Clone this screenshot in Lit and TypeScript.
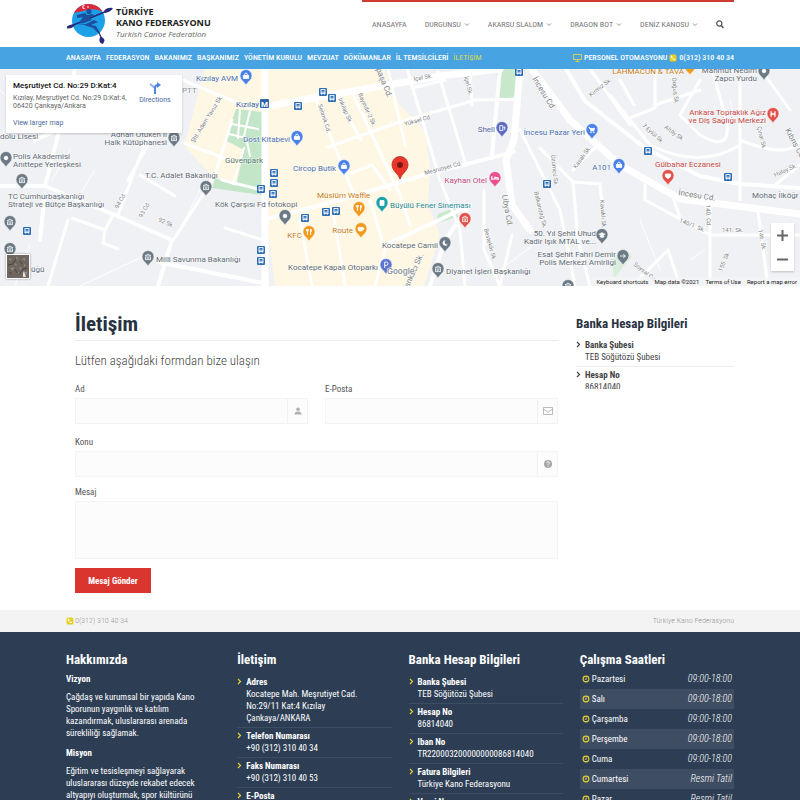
import { LitElement, html, svg, css } from "lit";
import { customElement } from "lit/decorators.js";

type Glyph = "bank" | "bag" | "dot" | "food" | "cup" | "cart" | "P" | "H" | "bed" | "moon" | "fuel" | "heart" | "cap" | "arrow" | "film";

interface Place {
  lines: string[];
  x: number;
  y: number;
  end?: boolean;
  color: string;
}

const GRAY = "#5f6b76";
const BLUE = "#4a6fae";
const ORANGE = "#c77c15";
const RED = "#c5453f";

const places: Place[] = [
  { lines: ["Kızılay AVM"], x: 238, y: 81, end: true, color: BLUE },
  { lines: ["Kızılay"], x: 259, y: 107, end: true, color: "#3c5f96" },
  { lines: ["PTT"], x: 182, y: 93, color: "#8d949b" },
  { lines: ["Dost Kitabevi"], x: 290, y: 142, end: true, color: BLUE },
  { lines: ["Güvenpark"], x: 225, y: 163, color: "#54796b" },
  { lines: ["T.C. Adalet Bakanlığı"], x: 145, y: 178, color: GRAY },
  { lines: ["Kök Çarşısı Fd fotokopi"], x: 215, y: 207, color: GRAY },
  { lines: ["dolu Lisesi"], x: 0, y: 139, color: GRAY },
  { lines: ["Polis Akademisi", "Anıttepe Yerleşkesi"], x: 13, y: 159, color: GRAY },
  { lines: ["TC Cumhurbaşkanlığı", "Strateji ve Bütçe Başkanlığı"], x: 8, y: 199, color: GRAY },
  { lines: ["üğü"], x: 31, y: 272, color: GRAY },
  { lines: ["Adnan Ötüken İl", "Halk Kütüphanesi"], x: 167, y: 137, end: true, color: GRAY },
  { lines: ["Milli Savunma Bakanlığı"], x: 156, y: 262, color: GRAY },
  { lines: ["Circop Butik"], x: 336, y: 171, end: true, color: BLUE },
  { lines: ["Müslüm Waffle"], x: 317, y: 198, color: ORANGE },
  { lines: ["KFC"], x: 302, y: 238, end: true, color: ORANGE },
  { lines: ["Route"], x: 353, y: 233, end: true, color: ORANGE },
  { lines: ["Büyülü Fener Sineması"], x: 390, y: 208, color: "#268a92" },
  { lines: ["Kayhan Otel"], x: 487, y: 183, end: true, color: "#c04a80" },
  { lines: ["Shell"], x: 495, y: 132, end: true, color: "#5563a5" },
  { lines: ["Kocatepe Camii"], x: 438, y: 248, end: true, color: GRAY },
  { lines: ["Kocatepe Kapalı Otoparkı"], x: 378, y: 270, end: true, color: GRAY },
  { lines: ["Diyanet İşleri Başkanlığı"], x: 446, y: 274, color: GRAY },
  { lines: ["İncesu Pazar Yeri"], x: 585, y: 135, end: true, color: BLUE },
  { lines: ["A101"], x: 611, y: 170, end: true, color: BLUE },
  { lines: ["Gülbahar Eczanesi"], x: 655, y: 167, color: RED },
  { lines: ["Ankara Topraklık Ağız", "ve Diş Sağlığı Merkezi"], x: 766, y: 115, end: true, color: RED },
  { lines: ["LAHMACUN & TAVA"], x: 684, y: 74, end: true, color: ORANGE },
  { lines: ["Mahmut Nedim", "Zapcı Yurdu"], x: 757, y: 73, end: true, color: GRAY },
  { lines: ["50. Yıl Şehit Uhud", "Kadir Işık MTAL ve..."], x: 596, y: 236, end: true, color: GRAY },
  { lines: ["Esat Şehit Fahri Demir", "Polis Merkezi Amirliği"], x: 616, y: 257, end: true, color: GRAY },
  { lines: ["Mohaç İlköğr"], x: 752, y: 198, color: GRAY },
];

const pins: [number, number, string, Glyph][] = [
  [246, 76, "#4a80e8", "bag"], [297, 137, "#4a80e8", "bag"], [344, 166, "#4a80e8", "bag"],
  [592, 130, "#4a80e8", "cart"], [619, 165, "#4a80e8", "bag"], [206, 187, "#6c7a85", "bank"],
  [285, 216, "#6c7a85", "dot"], [6, 158, "#6c7a85", "dot"], [22, 180, "#6c7a85", "bank"],
  [10, 222, "#6c7a85", "bank"], [10, 249, "#6c7a85", "bank"], [174, 138, "#6c7a85", "bank"],
  [148, 257, "#6c7a85", "bank"], [359, 208, "#f29a1f", "food"], [309, 232, "#f29a1f", "food"],
  [361, 229, "#f29a1f", "cup"], [382, 203, "#1ba0a8", "film"], [495, 178, "#e8508f", "bed"],
  [502, 128, "#5c6bc0", "fuel"], [465, 219, "#e2524b", "bank"], [445, 243, "#6c7a85", "moon"],
  [386, 265, "#5f74cf", "P"], [438, 269, "#6c7a85", "bank"], [668, 176, "#e2524b", "heart"],
  [773, 114, "#e2524b", "H"], [764, 71, "#6c7a85", "dot"], [602, 235, "#6c7a85", "cap"],
  [623, 256, "#6c7a85", "arrow"], [690, 66, "#f29a1f", "dot"], [568, 286, "#6c7a85", "bank"],
];

const stops: [number, number][] = [
  [27, 231], [261, 189], [274, 173], [274, 183], [273, 194], [261, 250], [261, 261], [323, 92],
  [332, 98], [298, 106], [305, 218], [326, 212], [336, 211], [519, 72], [648, 151], [728, 177], [547, 184],
];

const streets: [string, number, number, number, number][] = [
  ["Şht. Adem Yavuz Sk.", 194, 143, -58, 6], ["94 Cd.", 118, 209, -60, 6], ["93 Cd.", 142, 218, -60, 6],
  ["92 Sk.", 158, 221, 25, 6], ["Selanik Cd.", 318, 105, 72, 6], ["İnkılap Sk.", 338, 99, 66, 6],
  ["Bayındır-2 Sk.", 358, 94, 66, 6], ["Atpaşa Cd.", 373, 62, 68, 8], ["Yüksel Cd.", 405, 126, -16, 6],
  ["Meşrutiyet Cd.", 425, 175, -15, 6], ["İçel Sk.", 414, 81, -10, 6], ["İçel Sk.", 464, 77, 75, 6],
  ["Libya Cd.", 502, 195, 80, 8], ["Bestekâr Sk.", 484, 229, 75, 6], ["Tankacı Sk.", 407, 292, -66, 8],
  ["İncesu Cd.", 532, 79, 58, 8], ["Kırmız Sk.", 591, 97, -38, 6], ["Doğuş Sk.", 672, 78, 84, 6],
  ["7 Eylül Sk.", 642, 126, 42, 6], ["Altay Sk.", 664, 128, 36, 6], ["Çınar Sk.", 757, 127, 76, 6],
  ["Kıbrıs Cd.", 785, 130, 62, 8], ["Kasalı Sk.", 576, 169, -54, 6], ["Üzümcü Sk.", 551, 155, 84, 6],
  ["Balkandağ Sk.", 534, 192, 76, 6], ["Kavaklı Sk.", 600, 200, 86, 6], ["İncesu Cd.", 678, 195, 9, 8],
  ["Halay Sk.", 775, 177, -24, 6], ["140. Cd.", 706, 205, 88, 6], ["140/1. Sk.", 679, 222, 22, 6],
  ["141. Sk.", 722, 232, 0, 6], ["146. Sk.", 758, 230, 78, 6], ["155. Sk.", 722, 272, -68, 6],
  ["Soysal Cd.", 633, 265, 38, 6],
];

const glyph = (g: Glyph) => {
  switch (g) {
    case "bank": return svg`<path d="M-3-1 0-3 3-1zM-2.5 0v2M-.8 0v2M.8 0v2M2.5 0v2M-3 2.6h6" stroke-width=".8"/>`;
    case "bag": return svg`<path d="M-2.6-.6h5.2v3h-5.2z" fill="#fff"/><path d="M-1.3-.6v-1a1.3 1.3 0 0 1 2.6 0v1"/>`;
    case "dot": return svg`<circle r="1.8" fill="#fff"/>`;
    case "food": return svg`<path d="M-1.6-3v2.2M-1.6-.6V3M-2.6-3v2h2v-2M1.6-3V3M1.6-3c1.6 1 1 3 0 3.4"/>`;
    case "cup": return svg`<path d="M-2.8-1.6h4.4v2.2a1.4 1.4 0 0 1-1.4 1.4h-1.6a1.4 1.4 0 0 1-1.4-1.4z" fill="#fff"/><path d="M1.6-1h1.2v1.6H1.6"/>`;
    case "cart": return svg`<path d="M-3.2-2.4h1l1 3.2h3l.8-2.4h-4.4z" fill="#fff"/><circle cx="-1" cy="2.3" r=".5"/><circle cx="1.8" cy="2.3" r=".5"/>`;
    case "P": return svg`<path d="M-1.3 3v-6h1.6a1.6 1.6 0 0 1 0 3.4h-1.6"/>`;
    case "H": return svg`<path d="M-1.9-2.8v5.6M1.9-2.8v5.6M-1.9 0h3.8" stroke-width="1.3"/>`;
    case "bed": return svg`<path d="M-3.2-2v4M-3.2 1h6.4M3.2 2V0L0-.8V1M-1.6-.4h.1" stroke-width="1.2"/>`;
    case "moon": return svg`<path d="M.6-2.8a2.8 2.8 0 1 0 2.2 4.2A2.4 2.4 0 0 1 .6-2.8z" fill="#fff" stroke="none"/>`;
    case "fuel": return svg`<path d="M-2.2 2.6v-5h3v5zM1.4-.5l1.4.4v2M2.8-.1V-1.6"/>`;
    case "heart": return svg`<path d="M-2.6-2h5.2v2.6l-2.6 2-2.6-2z" fill="#fff"/>`;
    case "cap": return svg`<path d="M-3.4-.8 0-2.4 3.4-.8 0 .8zM-2 .6v1.4q2 1.4 4 0V.6" fill="#fff" stroke-width=".4"/>`;
    case "arrow": return svg`<path d="M-2.8 0h5M.2-2 2.4 0 .2 2"/>`;
    case "film": return svg`<path d="M-2-2.4h4v4.8h-4z" fill="#fff"/>`;
  }
};

@customElement("street-map")
class StreetMap extends LitElement {
  static styles = css`
    :host { display: block; position: relative; height: 217px; overflow: hidden; background: #eff1f4; font-family: Roboto, sans-serif; }
    .canvas { display: block; width: 100%; height: 100%; }
    .road { fill: none; stroke: #fff; stroke-linecap: round; stroke-linejoin: round; }
    .name { font-size: 8px; paint-order: stroke; stroke: #fff; stroke-width: 1px; stroke-opacity: 0.7; }
    .street { fill: #7b7f84; paint-order: stroke; stroke: #fff; stroke-width: 1px; }
    .end { text-anchor: end; }
    .mark { stroke: #fff; stroke-width: 0.9; fill: none; }
    .google { font-family: Inter, sans-serif; font-size: 8px; font-weight: 600; fill: #8d929a; paint-order: stroke; stroke: #fff; stroke-width: 1px; }
    .metro { font-size: 8px; font-weight: 700; fill: #fff; text-anchor: middle; }
    .card { position: absolute; left: 6px; top: 6px; box-sizing: border-box; width: 176px; height: 58px; padding: 5px 7px; background: #fff; box-shadow: 0 1px 2px #0003; display: grid; grid-template-columns: 1fr 40px; column-gap: 3px; }
    .address { font-size: 8px; line-height: 12px; font-weight: 500; color: #111; margin: 0; white-space: nowrap; }
    .detail { font-size: 7px; line-height: 8px; color: #666; margin: 2px 0 8px; white-space: nowrap; }
    .link { font-size: 7px; line-height: 10px; color: #4a6a9c; text-decoration: none; display: block; white-space: nowrap; }
    .directions { text-align: center; }
    .directions svg { display: block; margin: 1px auto 0; }
    .satellite { position: absolute; left: 6px; bottom: 7px; box-sizing: border-box; width: 24px; height: 25px; padding: 0; border: 1px solid #fff; background: #6f665f; box-shadow: 0 0 2px #0006; }
    .satellite svg { display: block; width: 22px; height: 23px; }
    .zoom { position: absolute; right: 6px; bottom: 15px; width: 23px; background: #fff; box-shadow: 0 1px 2px #0003; display: grid; }
    .zoom button { height: 24px; border: 0; padding: 0; background: none; display: grid; place-items: center; }
    .legal { position: absolute; right: 0; bottom: 0; padding: 0 3px 0 4px; background: #f5f5f5b3; display: flex; gap: 6px; font-size: 6px; line-height: 9px; color: #222; }
    .legal a { color: inherit; text-decoration: none; }
  `;

  render() {
    return html`
      <svg class="canvas" viewBox="0 69 800 217" preserveAspectRatio="xMidYMid slice" role="img" aria-label="Harita">
        <rect x="0" y="69" width="800" height="217" fill="#eff1f4"/>
        <path d="M205 69H384L400 105 424 130 430 165 428 205 440 235 424 286H275L266 212 262 192 214 178 184 146z" fill="#fef7e4"/>
        <path d="M236 109 262 112 262 195 212 188 215 178 236 186 244 150 225 140z" fill="#c3e6c8"/>
        <path class="road" stroke-width="2" d="M232 124 258 129M229 134 246 138M240 110 238 138M250 111 244 136M247 142 250 156M233 184 244 148"/>
        <path d="M497 69h21v31h-21zM438 214l17-6 3 9-22 6z" fill="#c8e8cc"/>
        <path d="M612 260l12-12 8 8-18 22z" fill="#d8eedb"/>
        <g class="road" stroke-width="7">
          <path d="M265 69V286M263 107 330 95 440 76 500 69M520 69 514 140 506 160 512 205 530 230M532 69 570 120 620 165 680 199 800 214"/>
        </g>
        <g class="road" stroke-width="4">
          <path d="M566 69 585 101 645 148 700 176 740 184 800 188M500 69 492 155M263 220 340 200 420 176 514 152M430 286 445 240 470 205 435 222 385 245"/>
          <path d="M0 186 45 186 115 215 172 240 158 286M35 140 62 128M45 186 75 69M158 262 263 283M40 240 44 200"/>
        </g>
        <g class="road" stroke-width="3">
          <path d="M178 78 250 108M184 143 224 158M232 120 214 178M215 176 170 245M222 180 262 190M128 180 168 110M140 175 175 196M118 215 148 135M68 220 48 286M72 218 105 230 113 215M105 230 103 243 118 249M225 228 263 240"/>
          <path d="M316 100 354 195M336 95 361 140M352 92 400 195 410 225M328 147 400 122 475 100 517 99M388 69 405 145M407 69 440 180 460 230 465 286M438 72 466 165M470 72 472 105M412 88 445 80M346 175 372 165 390 190M300 220 312 286M333 210 345 286M370 200 385 250 375 286"/>
          <path d="M484 190V250L500 286M520 130 560 210 575 286M512 235 500 286M540 148 573 182 600 184 602 205M573 182 578 240 590 286M573 170 595 148M645 200 710 235H800M680 218 674 200M710 205V286M758 212 768 286M645 185 645 200"/>
          <path d="M655 69V108L630 118M655 105 700 90M700 80 680 115 700 135Q735 155 725 115L712 69M740 80V200M740 145Q700 170 650 145L610 95M740 140Q790 160 800 140M620 80 634 105M765 75 790 110M775 185 800 165M632 286 668 250 680 286M590 69 630 125"/>
        </g>
        <g class="road" stroke="#dfe3e8" stroke-width="1">
          <path d="M0 90 40 130M20 110 5 130M70 150 52 180M95 170 70 210M185 220 205 180M30 245 15 286M80 286 140 258M540 240 500 270M640 220 660 270M690 260 705 250M730 100 735 120"/>
        </g>
        ${streets.map(([t, x, y, r, s]) => svg`<text class="street" font-size=${s} transform="translate(${x} ${y}) rotate(${r})">${t}</text>`)}
        ${stops.map(([x, y]) => svg`<g transform="translate(${x} ${y})"><rect x="-4" y="-4" width="8" height="8" rx="1" fill="#2c6db3"/><rect x="-2" y="-2.4" width="4" height="4" fill="none" stroke="#fff" stroke-width=".9"/><path d="M-2 .2h4M-1.6 2.6h.6M1 2.6h.6" stroke="#fff" stroke-width=".8"/></g>`)}
        <rect x="260" y="99" width="9" height="9" rx="1" fill="#2f68a6"/><text class="metro" x="264.5" y="106.5">M</text>
        ${places.map((p) => svg`${p.lines.map((l, i) => svg`<text class="name ${p.end ? "end" : ""}" x=${p.x} y=${p.y + i * 8} fill=${p.color}>${l}</text>`)}`)}
        ${pins.map(([x, y, c, g]) => svg`<g transform="translate(${x} ${y})"><path d="M0 9.5C-1 6-6 4.500-6-.5a6 6 0 0 1 12 0C6 4.500 1 6 0 9.500z" fill=${c} stroke="#fff" stroke-width=".6"/><g class="mark">${glyph(g)}</g></g>`)}
        <text class="google" x="387" y="274">Google</text>
        <path d="M400 179C398 173 392 171 392 164.500a8 8 0 0 1 16 0C408 171 402 173 400 179z" fill="#e8362c" stroke="#b42720" stroke-width=".8"/>
        <circle cx="400" cy="165" r="3" fill="#7d1712"/>
      </svg>
      <div class="card">
        <div>
          <p class="address">Meşrutiyet Cd. No:29 D:Kat:4</p>
          <p class="detail">Kızılay, Meşrutiyet Cd. No:29 D:Kat:4,<br>06420 Çankaya/Ankara</p>
          <a class="link" href="#map">View larger map</a>
        </div>
        <a class="link directions" href="#directions">
          <svg width="14" height="14" viewBox="0 0 14 14"><path d="M2 3l5 4v6" fill="none" stroke="#8eb1ee" stroke-width="2"/><path d="M7 13V7q0-3 3-3" fill="none" stroke="#4f86dd" stroke-width="2"/><path d="M9 1 13 4 9 7z" fill="#4f86dd"/></svg>
          Directions
        </a>
      </div>
      <button class="satellite" aria-label="Uydu görünümü">
        <svg viewBox="0 0 22 23"><path d="M2 3l3 1-2 2zM9 1l2 2-1 3zM15 4l3-1v3zM3 13l4-1-1 4zM12 12l3 1-2 2zM5 20l3-1M17 18l3-2v4zM7 8l3 1-1 2zM17 9l2 1-2 2zM11 17l2 1-1 2z" fill="#948a82"/><path d="M1 10l5-1 3-5M12 20l4-6 4-1M8 14l2 4M13 6l2 3M2 17l3 2" fill="none" stroke="#4a4440" stroke-width="1"/><path d="M16 22v-4l1-2 2 6z" fill="#e4e0dc"/></svg>
      </button>
      <div class="zoom">
        <button aria-label="Yakınlaştır"><svg width="11" height="11"><path d="M5.500 0v11M0 5.500h11" stroke="#666" stroke-width="2"/></svg></button>
        <button aria-label="Uzaklaştır"><svg width="11" height="11"><path d="M0 5.500h11" stroke="#666" stroke-width="2"/></svg></button>
      </div>
      <div class="legal"><span>Keyboard shortcuts</span><span>Map data ©2021</span><a href="#terms">Terms of Use</a><a href="#report">Report a map error</a></div>
    `;
  }
}

const chevronRight = html`<svg class="chev" width="5" height="7" viewBox="0 0 5 7" aria-hidden="true"><path d="M1 1l2.500 2.500L1 6" fill="none" stroke="currentColor" stroke-width="1.200"/></svg>`;
const phone = html`<svg width="8" height="8" viewBox="0 0 8 8" aria-hidden="true"><rect x=".5" y=".5" width="7" height="7" rx="1.500" fill="#e8cf24"/><path d="M2 1.800q-1 1 .8 2.800t3.200 1.400l.2-.8-1.200-.6-.6.5q-1-.5-1.300-1.300l.5-.6L3 1.800z" fill="#fff"/></svg>`;
const clock = html`<svg width="8" height="8" viewBox="0 0 8 8" aria-hidden="true"><circle cx="4" cy="4" r="2.900" fill="none" stroke="#e6d03a" stroke-width="1.100"/><path d="M4.200 2.300v2H2.800" fill="none" stroke="#e6d03a" stroke-width=".9"/></svg>`;

const pair = ([title, ...lines]: string[]) => html`
  <li>${chevronRight}<div><b>${title}</b>${lines.map((l) => html`<span>${l}</span>`)}</div></li>`;

@customElement("app-root")
class AppRoot extends LitElement {
  static styles = css`
    :host { display: block; background: #fff; color: #555; font-family: "Roboto Condensed", "Liberation Sans Narrow", Roboto, sans-serif; font-size: 9px; line-height: 12px; }
    h1, h2, h3, p, ul { margin: 0; padding: 0; }
    ul { list-style: none; }
    a { color: inherit; text-decoration: none; }
    .wrap { padding: 0 66px; }
    .header { display: flex; justify-content: space-between; height: 47px; }
    .brand { display: flex; align-items: flex-start; }
    .brand svg { margin-top: 2px; }
    .title { display: grid; grid-auto-rows: 11px; font-family: "Open Sans", sans-serif; font-size: 9px; line-height: 11px; padding-top: 6px; margin-left: 2px; color: #666; white-space: nowrap; }
    .title b { color: #222; }
    .title i { font-size: 8px; }
    .menu { flex: 0 0 352px; border-top: 2px solid #d0392f; padding: 0 10px; display: flex; justify-content: space-between; align-items: center; color: #777; font-size: 8px; white-space: nowrap; }
    .menu a { display: flex; align-items: center; gap: 3px; }
    .menu button { border: 0; background: none; padding: 0; display: grid; }
    .strip { background: #48a3e2; color: #fff; height: 22px; display: flex; align-items: center; justify-content: space-between; font-size: 8px; font-weight: 500; white-space: nowrap; }
    .links { display: flex; gap: 5px; }
    .active { color: #d9d944; font-weight: 400; }
    .quick { display: flex; gap: 2px; align-items: center; }
    .quick a { display: flex; gap: 2px; align-items: center; }
    .main { display: grid; grid-template-columns: minmax(0, 1fr) 158px; column-gap: 18px; padding: 25px 66px 17px 75px; }
    h1 { font-size: 21px; line-height: 26px; color: #28323f; padding-bottom: 3px; border-bottom: 1px solid #ececec; }
    .lead { font-size: 13px; line-height: 20px; font-weight: 300; margin-top: 10px; color: #444; }
    .form { display: grid; grid-template-columns: 1fr 1fr; column-gap: 17px; margin-top: 12px; }
    .full { grid-column: 1 / -1; }
    .field { display: grid; margin-bottom: 12px; }
    .field label { line-height: 13px; margin-bottom: 2px; font-size: 9px; }
    .field.full { margin-bottom: 9px; }
    .box { display: flex; height: 26px; box-sizing: border-box; border: 1px solid #f3f3f3; background: #fcfcfc; }
    input, textarea { flex: 1; min-width: 0; border: 0; background: none; padding: 0 6px; font: inherit; outline: 0; resize: none; }
    .icon { width: 19px; border-left: 1px solid #f0f0f0; display: grid; place-items: center; }
    .box.tall { height: 58px; }
    .send { justify-self: start; height: 25px; width: 76px; border: 0; background: #da352f; color: #fff; font: inherit; font-weight: 700; padding: 0; white-space: nowrap; }
    h2 { font-size: 13px; line-height: 18px; white-space: nowrap; }
    .bank { color: #28323f; padding-top: 4px; }
    .bank ul { color: #444; height: 52px; overflow: hidden; margin-top: 4px; }
    .pairs li { display: flex; align-items: flex-start; gap: 4px; padding: 2px 0 3px; border-bottom: 1px solid #ececec; }
    .pairs b, .pairs span { display: block; white-space: nowrap; }
    .chev { margin-top: 2px; }
    .base { height: 22px; background: #f3f3f3; display: flex; justify-content: space-between; align-items: center; font-size: 8px; font-weight: 300; color: #999; }
    .base span { display: flex; gap: 1px; align-items: center; }
    .footer { background: #2d3e54; color: #fff; display: grid; grid-template-columns: repeat(4, minmax(0, 1fr)); column-gap: 17px; padding-top: 19px; height: 149px; overflow: hidden; }
    .footer .pairs { margin-top: 5px; }
    .footer .pairs li { border-color: #3c4d63; }
    .footer .chev { color: #e6d03a; }
    .about h3 { font-size: 9px; line-height: 12px; margin: 4px 0 6px; }
    .about p { margin-bottom: 8px; white-space: nowrap; }
    .hours { width: 100%; border-collapse: collapse; }
    .hours td { height: 20px; padding: 0 2px; white-space: nowrap; }
    .hours tr:nth-child(even) { background: #3f4d62; }
    .day { display: flex; align-items: center; gap: 2px; }
    .hours .time { text-align: right; font-style: italic; font-weight: 300; font-size: 10px; }
  `;

  render() {
    const down = html`<svg width="6" height="5" viewBox="0 0 6 5" aria-hidden="true"><path d="M1 1.500l2 2 2-2" fill="none" stroke="#888" stroke-width=".9"/></svg>`;
    const days = ["Pazartesi", "Salı", "Çarşamba", "Perşembe", "Cuma", "Cumartesi", "Pazar"];
    return html`
      <header>
        <div class="wrap header">
          <a class="brand" href="#home">
            <svg width="48" height="43" viewBox="0 0 48 43" aria-hidden="true">
              <circle cx="22.500" cy="18.500" r="16.500" fill="#1ca0e6"/>
              <path d="M8 11A16.500 16.500 0 0 1 36.500 9.500Q29 6 21 8T8 11z" fill="#e3273a"/>
              <path d="M19.500 3.500a2 2 0 1 0 0 3 1.600 1.600 0 1 1 0-3z" fill="#fff"/><path d="M21 5h2M22 4v2" stroke="#fff" stroke-width=".6"/>
              <path d="M5 24 41 9" stroke="#27297d" stroke-width="1.500"/>
              <path d="M38 9q3-4 9-3-2 4-8 5zM1 24.500q4-3 8-1.500-3 4-8 3.500z" fill="#27297d"/>
              <circle cx="23" cy="9.500" r="2.600" fill="#1c4fa0"/>
              <path d="M11 13l8-2 2 2 6-1 1 2-5 2 3 2-8 3-6 1 3-4 2-3-6 1z" fill="#1c4fa0"/>
              <path d="M11 23l9-1 8-4 4 2-7 3 5 1 4 7-3-1-4-4-9-3z" fill="#1c4fa0"/>
              <path d="M32 29l4 8" stroke="#27297d" stroke-width="1.200"/><path d="M34 35q4 0 4.500 3.500L37 42q-5-1-3-7z" fill="#27297d"/>
            </svg>
            <span class="title"><b>TÜRKİYE</b><b>KANO FEDERASYONU</b><i>Turkish Canoe Federation</i></span>
          </a>
          <nav class="menu" aria-label="Ana menü">
            <a href="#home">ANASAYFA</a>
            ${["DURGUNSU", "AKARSU SLALOM", "DRAGON BOT", "DENİZ KANOSU"].map((t) => html`<a href="#menu">${t}${down}</a>`)}
            <button aria-label="Ara"><svg width="8" height="9" viewBox="0 0 8 9"><circle cx="3.300" cy="3.500" r="2.600" fill="none" stroke="#555" stroke-width="1.200"/><path d="M5.200 5.500 7.500 8" stroke="#555" stroke-width="1.500"/></svg></button>
          </nav>
        </div>
        <div class="wrap strip">
          <nav class="links" aria-label="Kurumsal">
            ${["ANASAYFA", "FEDERASYON", "BAKANIMIZ", "BAŞKANIMIZ", "YÖNETİM KURULU", "MEVZUAT", "DÖKÜMANLAR", "İL TEMSİLCİLERİ"].map((t) => html`<a href="#page">${t}</a>`)}
            <a class="active" href="#contact">İLETİŞİM</a>
          </nav>
          <div class="quick">
            <a href="#staff"><svg width="9" height="8" viewBox="0 0 9 8" aria-hidden="true"><path d="M.5.500h8v5h-8zM4.500 5.500v2M2.500 7.500h4" fill="none" stroke="#d4cf55"/></svg>PERSONEL OTOMASYONU</a>
            <a href="tel:03123104034">${phone}0(312) 310 40 34</a>
          </div>
        </div>
      </header>
      <street-map></street-map>
      <main class="main">
        <section>
          <h1>İletişim</h1>
          <p class="lead">Lütfen aşağıdaki formdan bize ulaşın</p>
          <form class="form">
            <div class="field"><label for="name">Ad</label><div class="box"><input id="name"><span class="icon"><svg width="8" height="8" viewBox="0 0 8 8"><circle cx="4" cy="2.200" r="1.800" fill="#b0b0b0"/><path d="M.5 7.500Q.5 4.500 4 4.500t3.500 3z" fill="#b0b0b0"/></svg></span></div></div>
            <div class="field"><label for="mail">E-Posta</label><div class="box"><input id="mail" type="email"><span class="icon"><svg width="10" height="8" viewBox="0 0 10 8"><path d="M.5.500h9v7h-9zM.5 2 5 5.200 9.500 2" fill="none" stroke="#aaa" stroke-width=".8"/></svg></span></div></div>
            <div class="field full"><label for="subject">Konu</label><div class="box"><input id="subject"><span class="icon"><svg width="8" height="8" viewBox="0 0 8 8"><circle cx="4" cy="4" r="4" fill="#a8a8a8"/><path d="M2.800 3a1.200 1.200 0 1 1 1.700 1.100Q4 4.300 4 5M4 5.800v.9" fill="none" stroke="#fff"/></svg></span></div></div>
            <div class="field full"><label for="message">Mesaj</label><div class="box tall"><textarea id="message"></textarea></div></div>
            <button class="send" type="button">Mesaj Gönder</button>
          </form>
        </section>
        <aside class="bank">
          <h2>Banka Hesap Bilgileri</h2>
          <ul class="pairs">${[["Banka Şubesi", "TEB Söğütözü Şubesi"], ["Hesap No", "86814040"]].map(pair)}</ul>
        </aside>
      </main>
      <div class="wrap base"><span>${phone}0(312) 310 40 34</span><span>Türkiye Kano Federasyonu</span></div>
      <footer class="wrap footer">
        <section class="about">
          <h2>Hakkımızda</h2>
          <h3>Vizyon</h3>
          <p>Çağdaş ve kurumsal bir yapıda Kano<br>Sporunun yaygınlık ve katılım<br>kazandırmak, uluslararası arenada<br>sürekliliği sağlamak.</p>
          <h3>Misyon</h3>
          <p>Eğitim ve tesisleşmeyi sağlayarak<br>uluslararası düzeyde rekabet edecek<br>altyapıyı oluşturmak, spor kültürünü</p>
        </section>
        <section>
          <h2>İletişim</h2>
          <ul class="pairs">${[["Adres", "Kocatepe Mah. Meşrutiyet Cad.", "No:29/11 Kat:4 Kızılay", "Çankaya/ANKARA"], ["Telefon Numarası", "+90 (312) 310 40 34"], ["Faks Numarası", "+90 (312) 310 40 53"], ["E-Posta"]].map(pair)}</ul>
        </section>
        <section>
          <h2>Banka Hesap Bilgileri</h2>
          <ul class="pairs">${[["Banka Şubesi", "TEB Söğütözü Şubesi"], ["Hesap No", "86814040"], ["Iban No", "TR220003200000000086814040"], ["Fatura Bilgileri", "Türkiye Kano Federasyonu"], ["Vergi No"]].map(pair)}</ul>
        </section>
        <section>
          <h2>Çalışma Saatleri</h2>
          <table class="hours"><tbody>${days.map((d, i) => html`<tr><td><span class="day">${clock}${d}</span></td><td class="time">${i < 5 ? "09:00-18:00" : "Resmi Tatil"}</td></tr>`)}</tbody></table>
        </section>
      </footer>
    `;
  }
}
